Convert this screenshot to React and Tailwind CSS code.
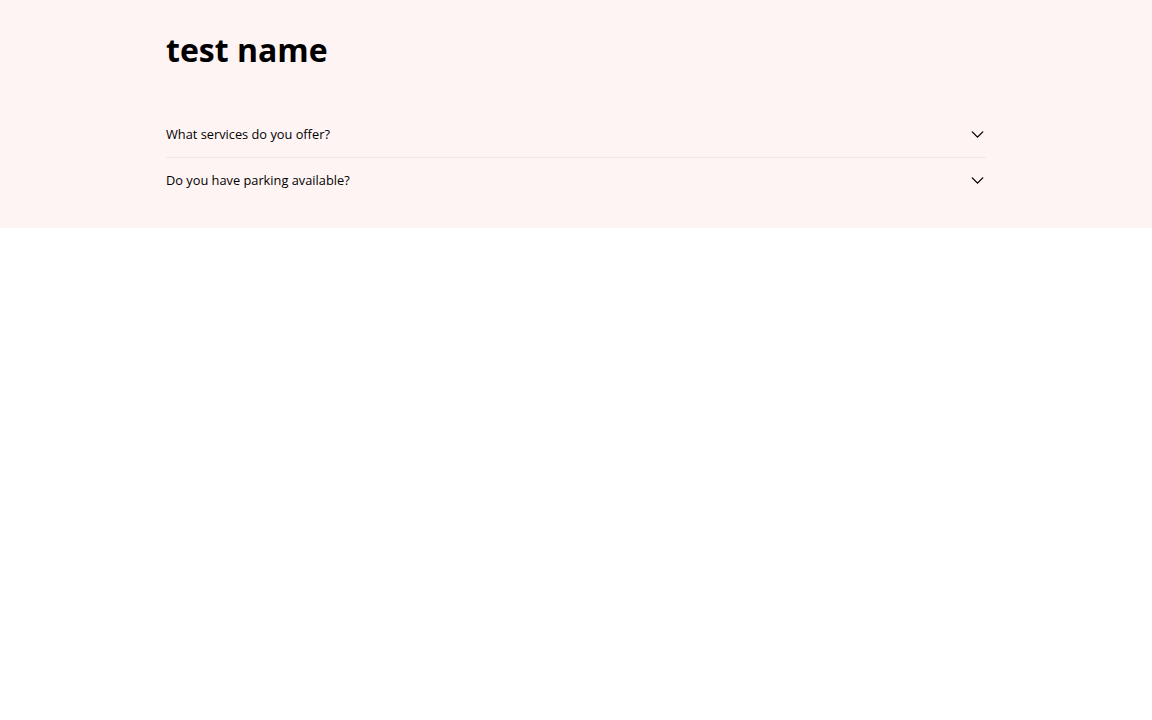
import React from "react";

function Chevron() {
  return (
    <svg width="21" height="21" viewBox="0 0 24 24" fill="none" stroke="currentColor" strokeWidth="1.6" strokeLinecap="round" strokeLinejoin="round">
      <path d="m6 9 6 6 6-6" />
    </svg>
  );
}

export default function App() {
  const items = ["What services do you offer?", "Do you have parking available?"];
  return (
    <div className="min-h-screen bg-white" style={{ fontFamily: '"Open Sans", sans-serif' }}>
      <section className="bg-[#fff4f4] pt-8 pb-[25px]">
        <div className="mx-auto w-[820px]">
          <h1 className="text-[32px] leading-[36px] font-bold text-black">test name</h1>
          <div className="mt-[44px]">
            {items.map((q, i) => (
              <div key={q} className={i < items.length - 1 ? "border-b border-[#f0e8e8]" : ""}>
                <button className="flex h-[45px] w-full items-center justify-between text-left text-[12.8px] text-black">
                  <span>{q}</span>
                  <span className="mr-[-2px] flex"><Chevron /></span>
                </button>
              </div>
            ))}
          </div>
        </div>
      </section>
    </div>
  );
}
